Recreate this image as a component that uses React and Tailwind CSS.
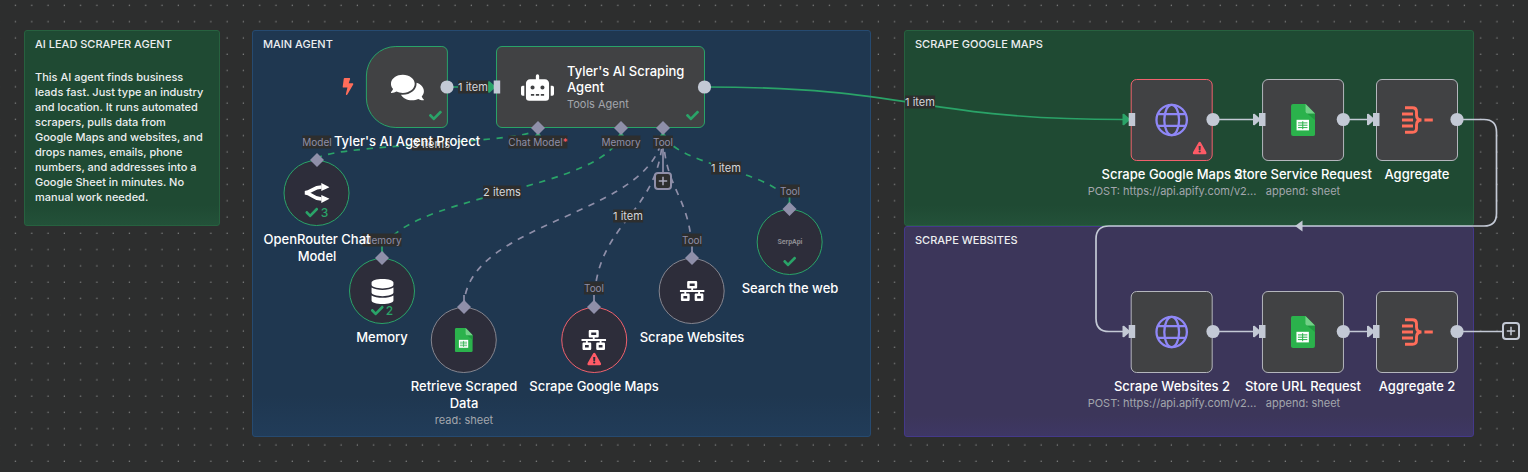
import React from "react";
import {
  FaBolt,
  FaCheck,
  FaComments,
  FaDatabase,
  FaExclamationTriangle,
  FaNetworkWired,
  FaRobot,
} from "react-icons/fa";

const GREEN = "#2aa368";
const PORT = "#c3c9d5";
const MUTED = "#8f8fa9";

/* ---------- drawings ---------- */

function GlobeIcon() {
  return (
    <svg viewBox="0 0 34 34" className="size-[34px]" fill="none" stroke="#8f87f7" strokeWidth="2.3" aria-hidden="true">
      <circle cx="17" cy="17" r="15.2" />
      <ellipse cx="17" cy="17" rx="7.4" ry="15.2" />
      <path d="M2.8 11.2h28.4M2.8 22.8h28.4" />
    </svg>
  );
}

function SheetsIcon({ className }) {
  return (
    <svg viewBox="0 0 24 32" className={className} aria-hidden="true">
      <path d="M2 0h12.5L24 9.5V30a2 2 0 0 1-2 2H2a2 2 0 0 1-2-2V2a2 2 0 0 1 2-2z" fill="#2bb24c" />
      <path d="M16 9.5h8V16z" fill="#219a40" />
      <path d="M14.5 0L24 9.5h-7.5a2 2 0 0 1-2-2z" fill="#73d088" />
      <rect x="5.5" y="15.8" width="12.4" height="10.6" fill="#fff" />
      <path d="M7 18.9h9.4M7 21.2h9.4M7 23.6h9.4" stroke="#2bb24c" strokeWidth="1" />
      <path d="M11.7 17.2v8" stroke="#2bb24c" strokeWidth="1" />
    </svg>
  );
}

function AggregateIcon() {
  return (
    <svg viewBox="0 0 31 28" className="h-7 w-[31px]" fill="none" stroke="#ff6d5a" strokeWidth="2.9" aria-hidden="true">
      <path d="M3 1.7h7.5q4 0 4 4v3.3q0 5 5 5q-5 0-5 5v3.3q0 4-4 4H3" />
      <path d="M0 8h11M0 14h11M0 20h11M22.4 14h8.4" />
    </svg>
  );
}

function RouterIcon() {
  return (
    <svg viewBox="0 0 25 20" className="h-5 w-[25px]" aria-hidden="true">
      <path d="M0 9.8C7.5 9.8 8 4 17 4M0 9.8C7.5 9.8 8 16 17 16" fill="none" stroke="#fff" strokeWidth="3.6" />
      <path d="M16.8 0L25 4.2L16.8 8zM16.8 12L25 15.8L16.8 20z" fill="#fff" />
    </svg>
  );
}

/* ---------- canvas background and connections ---------- */

function DotGrid() {
  return (
    <svg className="absolute inset-0 h-full w-full" aria-hidden="true">
      <defs>
        <pattern id="dots" x="7.5" y="-2.5" width="16.28" height="16.28" patternUnits="userSpaceOnUse">
          <circle cx="8" cy="8" r="0.7" fill="#8a8b8b" />
        </pattern>
      </defs>
      <rect width="100%" height="100%" fill="url(#dots)" />
    </svg>
  );
}

const subLinks = [
  { from: [317, 160], to: [538, 128], color: GREEN },
  { from: [382, 258], to: [621, 128], color: GREEN },
  { from: [464, 307], to: [663, 128], color: MUTED },
  { from: [594, 307], to: [663, 128], color: MUTED },
  { from: [692, 258], to: [663, 128], color: MUTED },
  { from: [789.5, 209], to: [663, 128], color: GREEN },
];

function subPath({ from: [x1, y1], to: [x2, y2] }) {
  const mid = (y1 + y2) / 2;
  return `M${x1} ${y1}C${x1} ${mid} ${x2} ${mid} ${x2} ${y2}`;
}

const arrows = [
  { x: 488, y: 87, color: GREEN },
  { x: 1122.5, y: 119.5, color: GREEN },
  { x: 1253, y: 119.5, color: PORT },
  { x: 1367, y: 119.5, color: PORT },
  { x: 1122.5, y: 331.5, color: PORT },
  { x: 1253, y: 331.5, color: PORT },
  { x: 1367, y: 331.5, color: PORT },
];

function Connections() {
  return (
    <svg className="pointer-events-none absolute inset-0 h-full w-full" fill="none" strokeWidth="1.7" aria-hidden="true">
      {subLinks.map((link) => (
        <path key={link.from.join()} d={subPath(link)} stroke={link.color} strokeDasharray="6.5 6.5" />
      ))}
      {subLinks.slice(1).map(({ from: [x, y], color }) => (
        <path key={x} d={`M${x} ${y}v-12`} stroke={color} />
      ))}
      <path d="M663 134V173" stroke={MUTED} />
      {[538, 621, 663].map((x) => (
        <path key={x} d={`M${x - 5} 138.5h10l-5-7z`} fill={GREEN} />
      ))}
      <path d="M447 87H490" stroke={GREEN} />
      <path d="M705 87C916 87 916 119.5 1124 119.5" stroke={GREEN} />
      <g stroke={PORT}>
        <path d="M1213 119.5H1256M1343 119.5H1370M1213 331.5H1256M1343 331.5H1370M1457 331.5H1502" />
        <path d="M1457 119.5H1484Q1496.5 119.5 1496.5 132V213.5Q1496.5 226 1484 226H1109Q1096 226 1096 239V318.5Q1096 331.5 1109 331.5H1124" />
      </g>
      {arrows.map(({ x, y, color }) => (
        <path key={`${x},${y}`} d={`M${x} ${y - 5.5}l1.5-.3l6.5 5.8l-6.5 5.8l-1.5-.3z`} fill={color} />
      ))}
      <path d="M1302.5 220.5V231.5L1295 226z" fill={PORT} />
    </svg>
  );
}

function Ports() {
  return (
    <svg className="pointer-events-none absolute inset-0 h-full w-full" aria-hidden="true">
      <g fill={PORT}>
        {[[447, 87], [704.5, 87], [1213, 119.5], [1343.3, 119.5], [1457, 119.5], [1213, 331.5], [1343.3, 331.5], [1457, 331.5]].map(
          ([x, y]) => (
            <circle key={`${x},${y}`} cx={x} cy={y} r="6.6" />
          )
        )}
        {[[497, 87], [1132, 119.5], [1262.3, 119.5], [1376.3, 119.5], [1132, 331.5], [1262.3, 331.5], [1376.3, 331.5]].map(
          ([x, y]) => (
            <rect key={`${x},${y}`} x={x - 3.3} y={y - 6.5} width="6.5" height="13" />
          )
        )}
      </g>
      <g fill={MUTED}>
        {[[538, 128], [621, 128], [663, 128], [317, 160], [382, 258], [464, 307], [594, 307], [692, 258], [789.5, 209]].map(
          ([x, y]) => (
            <path key={`${x},${y}`} d={`M${x} ${y - 7}l7 7l-7 7l-7-7z`} />
          )
        )}
      </g>
    </svg>
  );
}

/* ---------- text on the canvas ---------- */

function Tag({ x, y, muted, required, children }) {
  return (
    <span
      className={`absolute -translate-x-1/2 -translate-y-1/2 bg-[#2d2e2e] leading-[13px] whitespace-nowrap ${
        muted ? "text-[10px] text-[#8f8fa9]" : "text-[11px] text-[#d5d7dc]"
      }`}
      style={{ left: x, top: y }}
    >
      {children}
      {required && <span className="text-[#ff5a66]">*</span>}
    </span>
  );
}

const tags = [
  { x: 473, y: 87, text: "1 item" },
  { x: 431, y: 144, text: "3 items" },
  { x: 502, y: 192, text: "2 items" },
  { x: 628, y: 216, text: "1 item" },
  { x: 726, y: 168, text: "1 item" },
  { x: 920, y: 102, text: "1 item" },
  { x: 317, y: 142, text: "Model", muted: true },
  { x: 382, y: 240, text: "Memory", muted: true },
  { x: 594, y: 288, text: "Tool", muted: true },
  { x: 692, y: 240, text: "Tool", muted: true },
  { x: 790, y: 191, text: "Tool", muted: true },
  { x: 538, y: 142, text: "Chat Model", muted: true, required: true },
  { x: 621, y: 142, text: "Memory", muted: true },
  { x: 663, y: 142, text: "Tool", muted: true },
];

/* ---------- sticky notes ---------- */

const noteTones = {
  green: "border-[#27613f] bg-[#1f4a33] to-[#235139]",
  blue: "border-[#264a70] bg-[#1f3750] to-[#213c59]",
  purple: "border-[#44398a] bg-[#3c365a] to-[#3e3764]",
};

function Note({ title, tone, box, children }) {
  const [left, top, width, height] = box;
  return (
    <section
      className={`absolute rounded-[3px] border bg-linear-to-b from-transparent from-90% px-[10px] py-[6px] text-[11px] leading-[15px] font-medium text-[#eceef0] ${noteTones[tone]}`}
      style={{ left, top, width, height }}
    >
      <h2>{title}</h2>
      {children}
    </section>
  );
}

const about = `This AI agent finds business
leads fast. Just type an industry
and location. It runs automated
scrapers, pulls data from
Google Maps and websites, and
drops names, emails, phone
numbers, and addresses into a
Google Sheet in minutes. No
manual work needed.`;

/* ---------- nodes ---------- */

const outline = {
  ok: "border-[#2aa368]",
  error: "border-[#f0616d]",
  idle: "border-[#b4b6bd]",
  subIdle: "border-[#85858f]",
};

function Status({ kind, count }) {
  if (kind === "error") return <FaExclamationTriangle className="size-[14px] text-[#ff5a66]" />;
  if (kind === "ok")
    return (
      <span className="flex items-center gap-[2px] text-[12px] leading-[13px] font-medium text-[#2aa368]">
        <FaCheck className="size-[13px]" />
        {count}
      </span>
    );
  return null;
}

function Caption({ title, detail }) {
  return (
    <div className="mt-[5px] flex flex-col items-center text-center">
      <h3 className="text-[13px] leading-[17px] font-medium whitespace-pre text-white">{title}</h3>
      {detail && <p className="mt-px text-[11px] leading-[15px] whitespace-nowrap text-[#a3a6ad]">{detail}</p>}
    </div>
  );
}

function Node({ x, y, title, detail, state = "idle", icon, round = "rounded-md" }) {
  return (
    <article className="absolute flex -translate-x-1/2 flex-col items-center" style={{ left: x, top: y }}>
      <div className={`relative flex size-[82px] items-center justify-center border bg-[#414244] ${round} ${outline[state]}`}>
        {icon}
        <span className="absolute right-[5px] bottom-[5px]">
          <Status kind={state} />
        </span>
      </div>
      <Caption title={title} detail={detail} />
    </article>
  );
}

function SubNode({ x, y, title, detail, state = "subIdle", count, icon }) {
  return (
    <article className="absolute flex -translate-x-1/2 flex-col items-center" style={{ left: x, top: y }}>
      <div className={`relative flex size-[66px] items-center justify-center rounded-full border bg-[#2d2d3a] ${outline[state]}`}>
        {icon}
        <span className="absolute bottom-[6px] left-1/2 -translate-x-1/2">
          <Status kind={state} count={count} />
        </span>
      </div>
      <Caption title={title} detail={detail} />
    </article>
  );
}

function AddButton({ x, y, tone, label }) {
  return (
    <button
      type="button"
      aria-label={label}
      className={`absolute flex size-[18px] -translate-x-1/2 -translate-y-1/2 items-center justify-center rounded-[4px] border-2 bg-[#2d2e2e] ${tone}`}
      style={{ left: x, top: y }}
    >
      <svg viewBox="0 0 10 10" className="size-[10px]" stroke="currentColor" strokeWidth="1.5" aria-hidden="true">
        <path d="M5 .8v8.4M.8 5h8.4" />
      </svg>
    </button>
  );
}

const sheet = <SheetsIcon className="h-8 w-6" />;
const network = <FaNetworkWired className="h-5 w-[25px] text-white" />;
const request = "POST: https://api.apify.com/v2...";

export default function App() {
  return (
    <main className="relative min-h-screen w-full overflow-hidden bg-[#2d2e2e] font-['Inter','Liberation_Sans',sans-serif]">
      <DotGrid />

      <Note title="AI LEAD SCRAPER AGENT" tone="green" box={[24, 30, 196, 196]}>
        <p className="mt-[18px] whitespace-pre-line">{about}</p>
      </Note>
      <Note title="MAIN AGENT" tone="blue" box={[252, 30, 619, 407]} />
      <Note title="SCRAPE GOOGLE MAPS" tone="green" box={[904, 30, 570, 196]} />
      <Note title="SCRAPE WEBSITES" tone="purple" box={[904, 226, 570, 211]} />

      <Connections />
      {tags.map(({ text, ...rest }) => (
        <Tag key={`${rest.x},${rest.y}`} {...rest}>
          {text}
        </Tag>
      ))}

      <FaBolt className="absolute top-[78px] left-[339px] h-[17px] w-[18px] text-[#ff6d5a]" />
      <Node
        x={407}
        y={46}
        title="Tyler's AI Agent Project"
        state="ok"
        round="rounded-l-[30px] rounded-r-md"
        icon={<FaComments className="h-[33px] w-[33px] text-white" />}
      />

      <article
        className="absolute flex h-[82px] w-[209px] items-center gap-[13px] rounded-md border border-[#2aa368] bg-[#414244] pl-6"
        style={{ left: 496, top: 46 }}
      >
        <FaRobot className="h-[33px] w-[33px] shrink-0 text-white" />
        <div>
          <h3 className="text-[13px] leading-4 font-medium text-white">
            Tyler's AI Scraping
            <br />
            Agent
          </h3>
          <p className="mt-px text-[11px] leading-4 text-[#a3a6ad]">Tools Agent</p>
        </div>
        <span className="absolute right-[5px] bottom-[5px]">
          <Status kind="ok" />
        </span>
      </article>

      <SubNode x={317} y={160} title={"OpenRouter Chat\nModel"} state="ok" count={3} icon={<RouterIcon />} />
      <SubNode x={382} y={258} title="Memory" state="ok" count={2} icon={<FaDatabase className="size-[25px] text-white" />} />
      <SubNode x={464} y={307} title={"Retrieve Scraped\nData"} detail="read: sheet" icon={<SheetsIcon className="h-6 w-[18px]" />} />
      <SubNode x={594} y={307} title="Scrape Google Maps" state="error" icon={network} />
      <SubNode x={692} y={258} title="Scrape Websites" icon={network} />
      <SubNode
        x={790}
        y={209}
        title="Search the web"
        state="ok"
        icon={<span className="font-['Roboto',sans-serif] text-[7px] font-bold text-[#8d8d93]">SerpApi</span>}
      />

      <Node x={1172} y={79} title="Scrape Google Maps 2" detail={request} state="error" icon={<GlobeIcon />} />
      <Node x={1303} y={79} title="Store Service Request" detail="append: sheet" icon={sheet} />
      <Node x={1417} y={79} title="Aggregate" icon={<AggregateIcon />} />
      <Node x={1172} y={291} title="Scrape Websites 2" detail={request} icon={<GlobeIcon />} />
      <Node x={1303} y={291} title="Store URL Request" detail="append: sheet" icon={sheet} />
      <Node x={1417} y={291} title="Aggregate 2" icon={<AggregateIcon />} />

      <Ports />
      <AddButton x={663} y={181} tone="border-[#8f8fa9] text-[#a9a9bd]" label="Add tool" />
      <AddButton x={1511} y={331} tone="border-[#c3c9d5] text-[#c3c9d5]" label="Add node" />
    </main>
  );
}
